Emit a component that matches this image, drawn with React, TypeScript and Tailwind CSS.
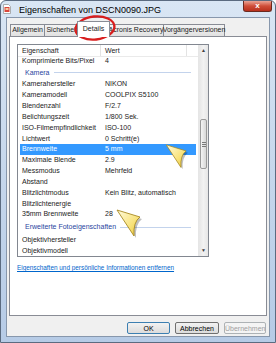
import React from 'react';

type Row = { k: string; v?: string; sel?: boolean; group?: boolean; h?: string };

const rows: Row[] = [
  { k: 'Komprimierte Bits/Pixel', v: '4' },
  { k: 'Kamera', group: true, h: 'h-[13px]' },
  { k: 'Kamerahersteller', v: 'NIKON' },
  { k: 'Kameramodell', v: 'COOLPIX S5100' },
  { k: 'Blendenzahl', v: 'F/2.7' },
  { k: 'Belichtungszeit', v: '1/800 Sek.' },
  { k: 'ISO-Filmempfindlichkeit', v: 'ISO-100' },
  { k: 'Lichtwert', v: '0 Schritt(e)' },
  { k: 'Brennweite', v: '5 mm', sel: true },
  { k: 'Maximale Blende', v: '2.9' },
  { k: 'Messmodus', v: 'Mehrfeld' },
  { k: 'Abstand', v: '' },
  { k: 'Blitzlichtmodus', v: 'Kein Blitz, automatisch' },
  { k: 'Blitzlichtenergie', v: '' },
  { k: '35mm Brennweite', v: '28' },
  { k: 'Erweiterte Fotoeigenschaften', group: true, h: 'h-[15px]' },
  { k: 'Objektivhersteller', v: '' },
  { k: 'Objektivmodell', v: '' },
];

const tabs = ['Allgemein', 'Sicherheit', 'Details', 'Acronis Recovery', 'Vorgängerversionen'];
const tabW: Record<string, string> = {
  Allgemein: 'w-[34px]',
  Sicherheit: 'w-[35px]',
  Details: 'w-[33px]',
  'Acronis Recovery': 'w-[55px]',
  'Vorgängerversionen': 'w-[62px]',
};

// gelber Hinweis-Pfeil
const Callout = ({ className }: { className: string }) => (
  <svg className={className} viewBox="0 0 28 30">
    <defs>
      <linearGradient id="cg" x1="0" y1="0" x2="1" y2="1">
        <stop offset="0" stopColor="#fffce0" />
        <stop offset="0.6" stopColor="#f8e27a" />
        <stop offset="1" stopColor="#e9c636" />
      </linearGradient>
    </defs>
    <path d="M3 3 L26 10 Q19 15 20 29 Z" fill="#000" opacity="0.25" />
    <path d="M1 1 L24 8 Q17 13 18 27 Z" fill="url(#cg)" stroke="#a88a22" strokeWidth="0.9" strokeLinejoin="round" />
  </svg>
);

const FileIcon = () => (
  <svg width="8" height="10" viewBox="0 0 8 10">
    <path d="M0.5 0.5 H5.5 L7.5 2.5 V9.5 H0.5 Z" fill="#fff" stroke="#9a9a9a" strokeWidth="0.8" />
    <rect x="1.5" y="3" width="5" height="5" fill="#d9463a" />
    <rect x="2.5" y="4" width="3" height="2" fill="#f7c9a0" />
  </svg>
);

const App = () => {
  return (
    <div
      className="relative w-[276px] h-[343px] overflow-hidden rounded-t-[6px] border border-[#5b6b80] bg-gradient-to-b from-[#d9e6f4] via-[#c6d7ec] to-[#b6cbe6] text-[7px] text-[#1b1b1b]"
      style={{ fontFamily: '"Liberation Sans Narrow", "Liberation Sans", Arial, sans-serif' }}
    >
      {/* Titelleiste */}
      <div className="flex h-[16px] items-start">
        <div className="ml-[2px] mt-[3px]">
          <FileIcon />
        </div>
        <span className="ml-[8px] mt-[3px] text-[9px] text-black">Eigenschaften von DSCN0090.JPG</span>
        <div className="ml-auto mr-[3px] flex h-[11px] w-[29px] items-center justify-center rounded-b-[3px] border border-t-0 border-[#6b2a20] bg-gradient-to-b from-[#e9a395] via-[#cf4d38] to-[#b8301c] text-[8px] font-bold leading-none text-white">
          x
        </div>
      </div>

      {/* Fensterinhalt */}
      <div className="mx-[5px] h-[320px] border border-[#8797ac] bg-[#f0f0f0] px-[2px] pt-[3px]">
        {/* Reiter */}
        <div className="flex h-[15px] items-end pl-[1px]">
          {tabs.map((t) => {
            const active = t === 'Details';
            return active ? (
              <div
                key={t}
                className={`relative z-10 -mx-[2px] -mb-px flex h-[16px] items-center justify-center border border-b-0 border-[#898c95] bg-white pb-[1px] ${tabW[t]}`}
              >
                {t}
              </div>
            ) : (
              <div
                key={t}
                className={`flex h-[12px] items-center justify-center whitespace-nowrap border border-b-0 border-r-0 border-[#898c95] bg-gradient-to-b from-[#f3f3f3] to-[#e1e1e1] last:border-r ${tabW[t]}`}
              >
                {t}
              </div>
            );
          })}
        </div>

        {/* Reiterinhalt */}
        <div className="h-[280px] border border-[#898c95] bg-white pl-[7px] pt-[7px]">
          <div className="flex h-[213px] w-[192px] border border-[#828790]">
            <div className="flex w-[180px] flex-col">
              {/* Kopfzeile */}
              <div className="flex h-[12px] shrink-0 items-center border-b border-[#eaeaea]">
                <div className="h-full w-[83px] border-r border-[#e3e3e3] pl-[4px] leading-[12px]">Eigenschaft</div>
                <div className="h-full w-[86px] border-r border-[#e3e3e3] pl-[4px] leading-[12px]">Wert</div>
              </div>
              <div className="flex-1 overflow-hidden">
                <div className="-mt-[1.5px]">
                  {rows.map((r) =>
                    r.group ? (
                      <div key={r.k} className={`flex items-center pl-[7px] ${r.h}`}>
                        <span className="whitespace-nowrap text-[#2a45a0]">{r.k}</span>
                        <div className="ml-[4px] mr-[7px] h-px flex-1 bg-[#c3d3ec]" />
                      </div>
                    ) : (
                      <div
                        key={r.k}
                        className={`mx-[2px] flex h-[10.83px] items-center whitespace-nowrap ${r.sel ? 'bg-[#3399ff] text-white' : ''}`}
                      >
                        <div className="w-[81px] overflow-hidden pl-[2px]">{r.k}</div>
                        <div className="pl-[4px]">{r.v}</div>
                      </div>
                    )
                  )}
                </div>
              </div>
            </div>

            {/* Bildlaufleiste */}
            <div className="ml-auto flex w-[10px] flex-col border-l border-[#e6e6e6] bg-gradient-to-r from-[#e6e6e6] via-[#f2f2f2] to-[#e6e6e6]">
              <div className="flex h-[11px] items-center justify-center text-[5px] text-[#404040]">▲</div>
              <div className="mt-[63px] mx-[1px] flex h-[50px] flex-col items-center justify-center gap-[1px] rounded-[2px] border border-[#9a9a9a] bg-gradient-to-r from-[#f4f4f4] to-[#d8d8d8]">
                <div className="h-px w-[4px] bg-[#7a7a7a]" />
                <div className="h-px w-[4px] bg-[#7a7a7a]" />
                <div className="h-px w-[4px] bg-[#7a7a7a]" />
              </div>
              <div className="mt-auto flex h-[11px] items-center justify-center text-[5px] text-[#404040]">▼</div>
            </div>
          </div>

          <div className="mt-[6px] whitespace-nowrap text-[6.4px] text-[#0066cc] underline">
            Eigenschaften und persönliche Informationen entfernen
          </div>
        </div>

        {/* Schaltflächen */}
        <div className="mt-[6px] flex justify-end gap-[5px] pr-[1px]">
          <button className="h-[12px] w-[43px] rounded-[2px] border border-[#3c7fb1] bg-gradient-to-b from-[#f2f2f2] to-[#dcdcdc] leading-none text-black">
            OK
          </button>
          <button className="h-[12px] w-[44px] rounded-[2px] border border-[#707070] bg-gradient-to-b from-[#f2f2f2] to-[#dcdcdc] leading-none text-black">
            Abbrechen
          </button>
          <button className="h-[12px] w-[42px] rounded-[2px] border border-[#adb2b5] bg-[#f4f4f4] leading-none text-[#a0a0a0]">
            Übernehmen
          </button>
        </div>
      </div>

      {/* Markierungen */}
      <svg className="absolute left-[72px] top-[12px] h-[30px] w-[44px]" viewBox="0 0 44 30">
        <ellipse cx="22" cy="15" rx="19.5" ry="11.5" fill="none" stroke="#d81e1e" strokeWidth="2.4" transform="rotate(-6 22 15)" />
      </svg>
      <Callout className="absolute left-[164px] top-[143px] h-[26px] w-[25px]" />
      <Callout className="absolute left-[115px] top-[208px] h-[30px] w-[28px]" />
    </div>
  );
};

export default App;
